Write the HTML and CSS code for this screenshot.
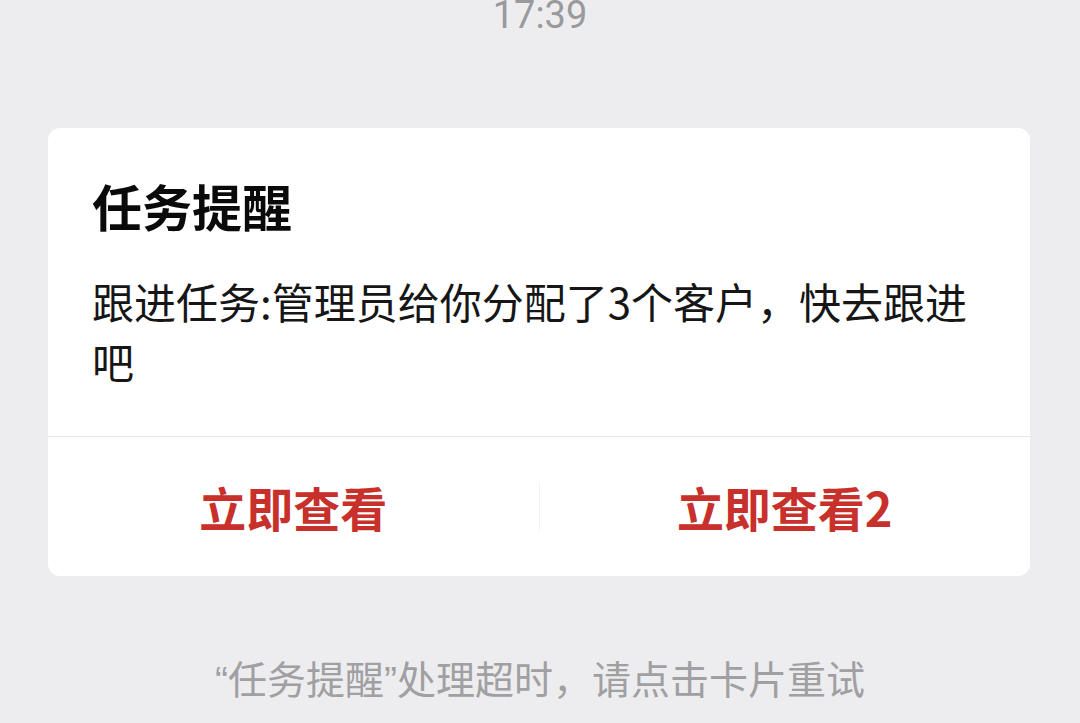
FILE: index.html
```html
<!DOCTYPE html>
<html lang="zh-CN">
<head>
    <meta charset="UTF-8">
    <meta name="viewport" content="width=device-width, initial-scale=1.0">
    <title>任务提醒</title>
    <link rel="stylesheet" href="styles.css">
</head>
<body>
    <div class="time">17:39</div>

    <div class="card">
        <div class="card-body">
            <h1 class="card-title">任务提醒</h1>
            <p class="card-text">跟进任务:管理员给你分配了3个客户，快去跟进吧</p>
        </div>
        <div class="card-actions">
            <button class="action">立即查看</button>
            <span class="sep"></span>
            <button class="action">立即查看2</button>
        </div>
    </div>

    <p class="tip"><span class="q">“</span>任务提醒<span class="q">”</span>处理超时，请点击卡片重试</p>
</body>
</html>
```

FILE: styles.css
```css
body {
    margin: 0;
    background: #ededf0;
    font-family: "Noto Sans CJK SC", "Noto Sans", sans-serif;
}
.time {
    text-align: center;
    font-family: Roboto, "Noto Sans", sans-serif;
    font-size: 38px;
    line-height: 30px;
    color: #9a9a9c;
}
.card {
    margin: 98px 50px 0 48px;
    background: #fff;
    border-radius: 12px;
    overflow: hidden;
}
.card-body {
    padding: 47px 44px 45px;
    border-bottom: 1px solid #e8e8ea;
}
.card-title {
    margin: 0;
    font-size: 50px;
    line-height: 60px;
    font-weight: bold;
    color: #0a0a0a;
}
.card-text {
    margin: 36px 0 0;
    font-size: 42px;
    line-height: 60px;
    color: #161616;
}
.card-actions {
    display: flex;
    align-items: center;
    height: 139px;
}
.action {
    flex: 1;
    height: 100%;
    border: none;
    background: none;
    padding: 0;
    font-family: inherit;
    font-size: 47px;
    font-weight: bold;
    color: #c8302b;
}
.sep {
    width: 1px;
    height: 48px;
    background: #f0f0f2;
}
.tip {
    margin: 78px 0 0;
    text-align: center;
    font-size: 39px;
    line-height: 46px;
    color: #a0a0a2;
}
.tip .q {
    font-family: "Liberation Sans", sans-serif;
}
```
